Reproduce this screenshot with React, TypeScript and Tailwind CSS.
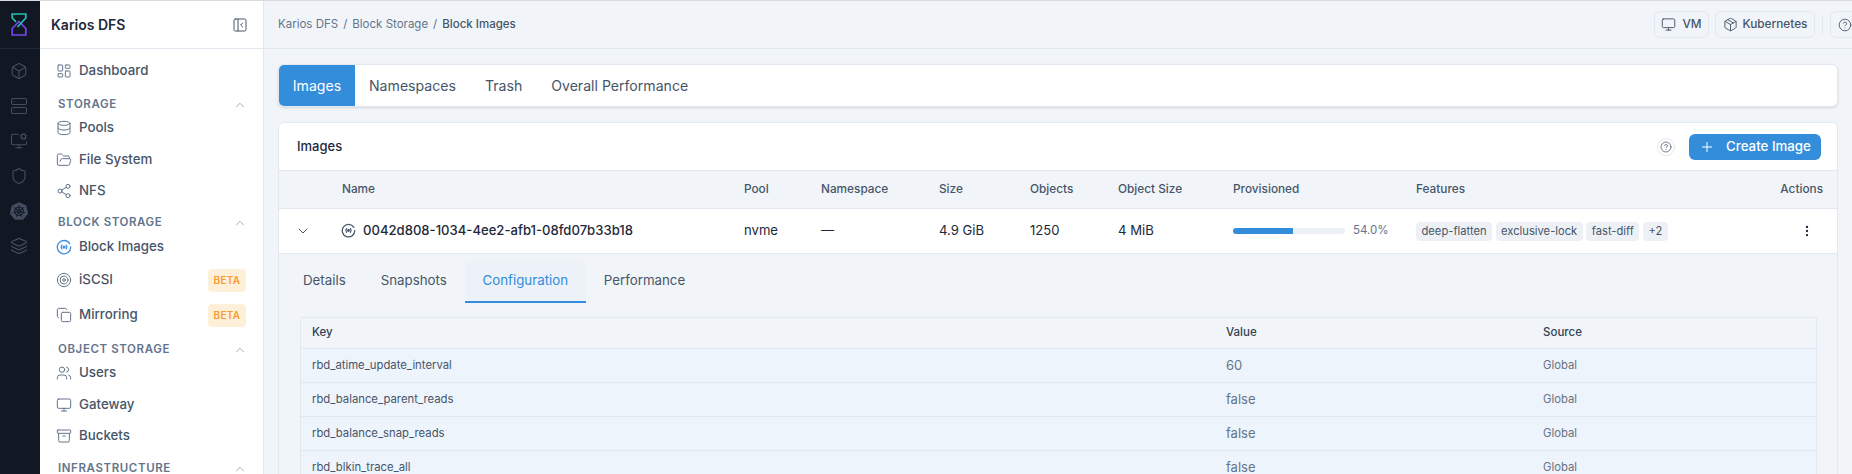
import React from "react";
import {
  Archive,
  Box,
  ChevronDown,
  ChevronUp,
  CircleHelp,
  Copy,
  Database,
  EllipsisVertical,
  FolderOpen,
  Layers,
  LayoutDashboard,
  Monitor,
  MonitorCog,
  Package,
  PanelLeftClose,
  Plus,
  Server,
  Share2,
  Shield,
  Target,
  Users,
} from "lucide-react";
import { SiKubernetes } from "react-icons/si";

const DiskIcon = ({ className }: { className?: string }) => (
  <svg viewBox="0 0 24 24" fill="none" stroke="currentColor" strokeWidth="2" strokeLinecap="round" className={className}>
    <path d="M20.5 7A10 10 0 1 0 22 12" />
    <path d="M8.8 9.2a4.5 4.5 0 0 0 0 5.6" />
    <path d="M15.2 9.2a4.5 4.5 0 0 1 0 5.6" />
    <circle cx="12" cy="12" r="1.3" fill="currentColor" />
  </svg>
);

const Logo = () => (
  <svg viewBox="0 0 16 23" fill="none" strokeWidth="1.7" className="h-[23px] w-[16px]">
    <path d="M8 22H1.2v-6.5L8 8.5l6.8 7V22H8z" stroke="#7448ee" />
    <path d="M5 8.8L1.2 5V1h13.6v4L6.5 14" stroke="#1fc4b4" />
  </svg>
);

const NavItem = ({
  icon,
  label,
  tall,
  active,
}: {
  icon: React.ReactNode;
  label: string;
  tall?: boolean;
  active?: boolean;
}) => (
  <div className={`flex items-center pl-[16px] pr-[17px] ${tall ? "h-[35px]" : active ? "h-[32px]" : "h-[31.5px]"}`}>
    <span className={`flex w-[23px] shrink-0 ${active ? "text-[#3b8fdc]" : "text-[#64748b]"}`}>{icon}</span>
    <span className="flex-1 text-[13.3px] font-medium text-[#475569]">{label}</span>
    {tall && (
      <span className="flex h-[23px] w-[38px] items-center justify-center rounded-[4px] bg-[#feefd8] text-[10px] font-semibold tracking-[0.3px] text-[#f99b2f]">
        BETA
      </span>
    )}
  </div>
);

const Section = ({ label, className }: { label: string; className: string }) => (
  <div className={`flex h-[16px] items-center justify-between pl-[18px] pr-[16px] ${className}`}>
    <span className="text-[11.5px] font-semibold tracking-[0.6px] text-[#64748b]">{label}</span>
    <ChevronUp className="size-[14px] text-[#94a3b8]" strokeWidth={1.5} />
  </div>
);

const navIcon = "size-[16px]";
const railIcon = "size-[18px] text-[#434e60]";

const configRows = [
  { key: "rbd_atime_update_interval", value: "60" },
  { key: "rbd_balance_parent_reads", value: "false" },
  { key: "rbd_balance_snap_reads", value: "false" },
  { key: "rbd_blkin_trace_all", value: "false" },
];

const imageCols = "grid grid-cols-[63px_402px_77px_118px_91px_88px_115px_183px_1fr] items-center";
const chip = "flex h-[19px] items-center rounded-[4px] bg-[#edf1f6] px-[5.5px]";

export default function App() {
  return (
    <div className="flex h-[474px] w-[1852px] overflow-hidden border-t border-[#d9dadf] bg-[#f1f5f9] font-['Inter',sans-serif]">
      {/* icon rail */}
      <aside className="flex w-[40px] shrink-0 flex-col items-center bg-[#111723]">
        <div className="flex h-[48px] w-full shrink-0 items-center justify-center border-b border-[#232a36] pr-[2px]">
          <Logo />
        </div>
        <div className="mt-[13px] flex flex-col items-center gap-[17px] pr-[2px]">
          <Box className={railIcon} strokeWidth={1.5} />
          <Server className={railIcon} strokeWidth={1.5} />
          <MonitorCog className={railIcon} strokeWidth={1.5} />
          <Shield className={railIcon} strokeWidth={1.5} />
          <SiKubernetes className="size-[18px] text-[#434e60]" />
          <Layers className={railIcon} strokeWidth={1.5} />
        </div>
      </aside>

      {/* sidebar */}
      <aside className="flex w-[224px] shrink-0 flex-col border-r border-[#e2e8f0] bg-white">
        <div className="flex h-[48px] shrink-0 items-center justify-between border-b border-[#e2e8f0] pl-[11px] pr-[15px]">
          <span className="text-[14px] font-semibold text-[#1e293b]">Karios DFS</span>
          <PanelLeftClose className="size-[16px] text-[#475569]" strokeWidth={1.5} />
        </div>
        <div className="pt-[6.5px]">
          <NavItem icon={<LayoutDashboard className={navIcon} strokeWidth={1.5} />} label="Dashboard" />
          <Section label="STORAGE" className="mt-[9.5px]" />
          <NavItem icon={<Database className={navIcon} strokeWidth={1.5} />} label="Pools" />
          <NavItem icon={<FolderOpen className={navIcon} strokeWidth={1.5} />} label="File System" />
          <NavItem icon={<Share2 className={navIcon} strokeWidth={1.5} />} label="NFS" />
          <Section label="BLOCK STORAGE" className="mt-[7.5px]" />
          <NavItem active icon={<DiskIcon className={navIcon} />} label="Block Images" />
          <NavItem tall icon={<Target className={navIcon} strokeWidth={1.5} />} label="iSCSI" />
          <NavItem tall icon={<Copy className={navIcon} strokeWidth={1.5} />} label="Mirroring" />
          <Section label="OBJECT STORAGE" className="mt-[9px]" />
          <NavItem icon={<Users className={navIcon} strokeWidth={1.5} />} label="Users" />
          <NavItem icon={<Monitor className={navIcon} strokeWidth={1.5} />} label="Gateway" />
          <NavItem icon={<Archive className={navIcon} strokeWidth={1.5} />} label="Buckets" />
          <Section label="INFRASTRUCTURE" className="mt-[8.5px]" />
        </div>
      </aside>

      {/* main */}
      <main className="flex min-w-0 flex-1 flex-col">
        <header className="flex h-[48px] shrink-0 items-center justify-between border-b border-[#e2e8f0] pl-[14px]">
          <div className="flex items-center gap-[5px] text-[11.5px] text-[#64748b]">
            <span>Karios DFS</span>
            <span>/</span>
            <span>Block Storage</span>
            <span>/</span>
            <span className="font-medium text-[#475569]">Block Images</span>
          </div>
          <div className="flex items-center">
            <div className="flex h-[27px] w-[55px] items-center justify-center gap-[6px] rounded-[6px] border border-[#e2e8f0] text-[11.8px] font-medium text-[#475569]">
              <Monitor className="size-[15px]" strokeWidth={1.5} />
              VM
            </div>
            <div className="ml-[6px] flex h-[27px] w-[100px] items-center justify-center gap-[5px] rounded-[6px] border border-[#e2e8f0] text-[11.8px] font-medium text-[#475569]">
              <Package className="size-[15px]" strokeWidth={1.5} />
              Kubernetes
            </div>
            <div className="ml-[7px] h-[18px] w-px bg-[#e2e8f0]" />
            <div className="ml-[7px] -mr-[8px] flex h-[27px] w-[30px] items-center justify-center rounded-[6px] border border-[#e2e8f0] text-[#475569]">
              <CircleHelp className="size-[14px]" strokeWidth={1.5} />
            </div>
          </div>
        </header>

        <div className="flex min-h-0 flex-1 flex-col gap-[15px] pl-[14px] pr-[14px] pt-[15px]">
          <div className="flex h-[43px] shrink-0 overflow-hidden rounded-[6px] border border-[#e2e8f0] bg-white text-[14.1px] text-[#475569] shadow-sm">
            <div className="flex w-[76px] items-center justify-center bg-[#338ddb] text-white">Images</div>
            <span className="ml-[14px] self-center">Namespaces</span>
            <span className="ml-[29px] self-center">Trash</span>
            <span className="ml-[29px] self-center">Overall Performance</span>
          </div>

          <div className="flex min-h-0 flex-1 flex-col overflow-hidden rounded-t-[6px] border border-b-0 border-[#e2e8f0]">
            <div className="flex h-[48px] shrink-0 items-center justify-between border-b border-[#e2e8f0] bg-white pl-[18px] pr-[16px]">
              <span className="text-[13px] font-medium text-[#1e293b]">Images</span>
              <div className="flex items-center gap-[14px]">
                <div className="flex size-[18px] items-center justify-center rounded-full border border-[#e2e8f0]">
                  <CircleHelp className="size-[12px] text-[#475569]" strokeWidth={1.5} />
                </div>
                <div className="flex h-[26px] w-[132px] items-center rounded-[6px] bg-[#338ddb] pl-[10px] text-[13.3px] font-medium text-white">
                  <Plus className="mr-[11px] size-[16px]" strokeWidth={1.5} />
                  Create Image
                </div>
              </div>
            </div>

            <div className={`${imageCols} h-[38px] shrink-0 border-b border-[#e2e8f0] text-[11.8px] font-medium text-[#475569]`}>
              <span />
              <span>Name</span>
              <span>Pool</span>
              <span>Namespace</span>
              <span>Size</span>
              <span>Objects</span>
              <span>Object Size</span>
              <span>Provisioned</span>
              <span className="flex justify-between pr-[14px]">
                Features
                <span>Actions</span>
              </span>
            </div>

            <div className={`${imageCols} h-[45px] shrink-0 border-b border-[#e2e8f0] bg-white text-[13.1px] text-[#1e293b]`}>
              <ChevronDown className="ml-[16px] size-[16px] text-[#475569]" strokeWidth={1.5} />
              <span className="flex items-center gap-[7px] font-medium">
                <DiskIcon className="-ml-[1px] size-[15px] text-[#475569]" />
                0042d808-1034-4ee2-afb1-08fd07b33b18
              </span>
              <span>nvme</span>
              <span>—</span>
              <span>4.9 GiB</span>
              <span>1250</span>
              <span>4 MiB</span>
              <span className="flex items-center">
                <span className="h-[6px] w-[112px] overflow-hidden rounded-full bg-[#edf1f6]">
                  <span className="block h-full w-[54%] bg-[#338ddb]" />
                </span>
                <span className="ml-[8px] text-[11.5px] text-[#64748b]">54.0%</span>
              </span>
              <span className="flex items-center justify-between pr-[23px]">
                <span className="flex gap-[3.5px] text-[11.2px] text-[#475569]">
                  <span className={chip}>deep-flatten</span>
                  <span className={chip}>exclusive-lock</span>
                  <span className={chip}>fast-diff</span>
                  <span className={chip}>+2</span>
                </span>
                <EllipsisVertical className="size-[14px] text-[#1e293b]" />
              </span>
            </div>

            <div className="flex flex-col pl-[21px] pr-[20px] pt-[7px]">
              <div className="flex h-[42px] items-stretch text-[13.3px] text-[#475569]">
                <span className="flex items-center pb-[3px] pl-[3px]">Details</span>
                <span className="ml-[35px] flex items-center pb-[3px]">Snapshots</span>
                <span className="ml-[18px] flex w-[121px] items-center justify-center border-b-2 border-[#338ddb] bg-[#edf1f8] pb-[1px] text-[#338ddb]">Configuration</span>
                <span className="ml-[18px] flex items-center pb-[3px]">Performance</span>
              </div>
              <div className="mt-[14px] rounded-t-[2px] border border-b-0 border-[#e2e8f0]">
                <div className="grid h-[31px] grid-cols-[914px_317px_1fr] items-center border-b border-[#e2e8f0] pl-[11px] text-[11.5px] font-medium text-[#334155]">
                  <span>Key</span>
                  <span>Value</span>
                  <span>Source</span>
                </div>
                {configRows.map((row) => (
                  <div
                    key={row.key}
                    className="grid h-[34px] grid-cols-[914px_317px_1fr] items-center border-b border-[#e2e8f0] bg-[#edf4fc] pl-[11px]"
                  >
                    <span className="text-[11.3px] text-[#475569]">{row.key}</span>
                    <span className="text-[13px] text-[#64748b]">{row.value}</span>
                    <span className="text-[11.3px] text-[#6b7280]">Global</span>
                  </div>
                ))}
              </div>
            </div>
          </div>
        </div>
      </main>
    </div>
  );
}
